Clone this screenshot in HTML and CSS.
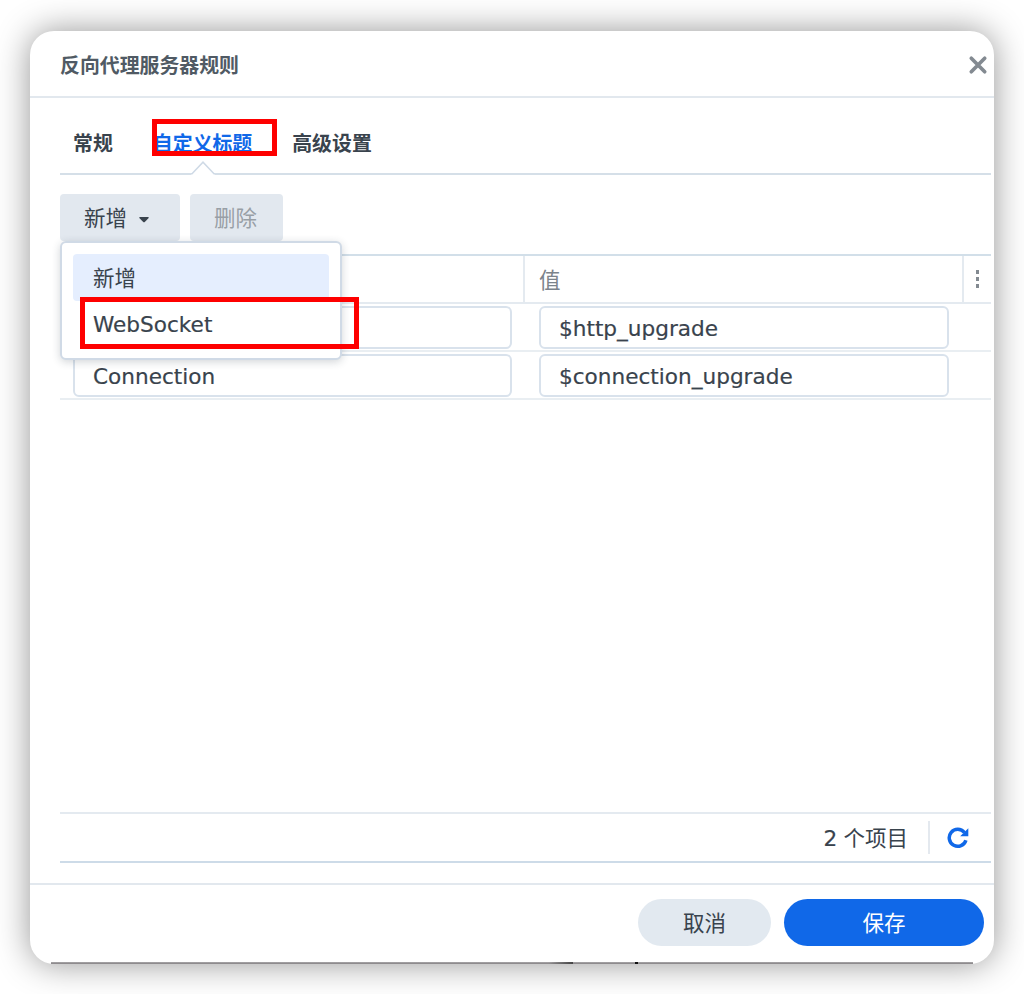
FILE: index.html
```html
<!DOCTYPE html>
<html lang="zh-CN">
<head>
<meta charset="utf-8">
<title>反向代理服务器规则</title>
<link rel="stylesheet" href="styles.css">
</head>
<body>
<div class="dialog">
  <header class="titlebar">
    <h1 class="title">反向代理服务器规则</h1>
    <svg class="close" width="20" height="20" viewBox="0 0 20 20"><path d="M3.300 3.300L16.700 16.700M16.700 3.300L3.300 16.700" stroke="#838a91" stroke-width="3.700" stroke-linecap="round"/></svg>
  </header>
  <main class="content">
    <nav class="tabs">
      <span class="tab">常规</span>
      <span class="tab tab-active">自定义标题
        <svg class="pointer" width="24" height="14" viewBox="0 0 24 14"><path d="M0 13.500L12 1.500L24 13.500V14H0Z" fill="#fff"/><path d="M0 12.700H1L12 1.200L23 12.700H24" fill="none" stroke="#cfdae6" stroke-width="1.500"/></svg>
        <i class="mark mark-tab"></i>
      </span>
      <span class="tab">高级设置</span>
    </nav>
    <div class="toolbar">
      <div class="button button-add">新增<svg width="10" height="6" viewBox="0 0 10 6"><path d="M.3 1Q0 0 1 0H9Q10 0 9.700 1L6 4.800Q5 5.800 4 4.800Z" fill="#39434d"/></svg>
        <div class="menu">
          <div class="menu-item menu-item-hover">新增</div>
          <div class="menu-item"><span class="latin">WebSocket</span></div>
          <i class="mark mark-item"></i>
        </div>
      </div>
      <div class="button button-delete">删除</div>
    </div>
    <section class="grid">
      <div class="row head"><div class="cell name"></div><div class="cell value">值</div><div class="more"><i></i><i></i><i></i></div></div>
      <div class="row"><div class="cell"><div class="field"></div></div><div class="cell"><div class="field"><span class="latin">$http_upgrade</span></div></div></div>
      <div class="row"><div class="cell"><div class="field"><span class="latin">Connection</span></div></div><div class="cell"><div class="field"><span class="latin">$connection_upgrade</span></div></div></div>
      <div class="status">
        <span class="count"><span class="latin">2</span> 个项目</span>
        <span class="divider"></span>
        <svg class="refresh" width="22" height="22" viewBox="0 0 22 22"><path d="M18.900 13.200A8.500 8.500 0 1 1 17.400 5.500" fill="none" stroke="#1068e8" stroke-width="3.500"/><path d="M21.300 1.200V9.200H13.200Z" fill="#1068e8"/></svg>
      </div>
    </section>
  </main>
  <footer class="actions">
    <div class="pill cancel">取消</div>
    <div class="pill save">保存</div>
  </footer>
</div>
</body>
</html>
```
FILE: styles.css
```css
* { box-sizing: border-box; }
body {
  margin: 0;
  padding: 31px 30px 30px;
  height: 994px;
  overflow: hidden;
  background: #fff;
  color: #39434d;
  font: 21.5px/30px "Noto Sans CJK SC", sans-serif;
}
.dialog {
  position: relative;
  display: flex;
  flex-direction: column;
  height: 933px;
  background: #fff;
  border-radius: 24px;
  box-shadow: 0 0 34px rgba(0, 0, 0, .42);
}
.dialog::after {
  content: "";
  position: absolute;
  left: 21px;
  right: 21px;
  bottom: 0;
  height: 2px;
  background:
    linear-gradient(#111, #111) 584px 0 / 3px 2px no-repeat,
    linear-gradient(90deg, transparent, #444) 498px 0 / 24px 2px no-repeat,
    linear-gradient(#aaa8aa, #858184);
}
.titlebar {
  display: flex;
  align-items: center;
  justify-content: space-between;
  height: 67px;
  padding: 0 6px 0 30px;
  border-bottom: 2px solid #e2e8ee;
}
.title { margin: 3px 0 0; font-size: 19.9px; font-weight: 600; color: #505a64; }
.close { margin-top: 3px; }
.content { display: flex; flex: 1; flex-direction: column; padding: 0 3px 20px 30px; }
.tabs {
  display: flex;
  gap: 40px;
  height: 77px;
  padding: 30px 13px 0;
  border-bottom: 2px solid #d5dfe8;
  font-size: 19.9px;
  font-weight: 700;
}
.tab { position: relative; }
.tab-active { color: #1068e8; }
.pointer { position: absolute; left: 38px; top: 33px; }
.mark { position: absolute; border: 5px solid #fe0000; }
.mark-tab { left: -1px; top: -9px; width: 125px; height: 37px; }
.toolbar { display: flex; gap: 10px; padding-top: 19px; height: 79px; }
.button {
  position: relative;
  display: flex;
  align-items: center;
  height: 47px;
  padding: 0 0 1px 24px;
  border-radius: 4px;
  background: #e2e8ef;
}
.button-add { width: 120px; gap: 12px; }
.button-add > svg { margin-top: 5px; }
.button-delete { width: 93px; color: #989fa6; }
.menu {
  position: absolute;
  z-index: 2;
  left: 0;
  top: 47px;
  width: 282px;
  height: 119px;
  padding: 11px;
  border: 2px solid #d0dae6;
  border-radius: 6px;
  background: #fff;
  box-shadow: 0 2px 8px rgba(30, 45, 60, .2);
}
.menu-item {
  display: flex;
  align-items: center;
  width: 256px;
  height: 46.500px;
  padding-left: 20px;
  border-radius: 4px;
}
.menu-item .latin { margin-top: 2px; }
.menu-item-hover { background: #e5eefe; }
.mark-item { left: 18px; top: 54px; width: 279px; height: 52px; }
.latin {
  font-family: "DejaVu Sans", "Noto Sans CJK SC", sans-serif;
  font-size: 21.6px;
  -webkit-text-stroke: .2px currentColor;
}
.grid { display: flex; flex: 1; flex-direction: column; border-top: 2px solid #d2dfe9; border-bottom: 2px solid #cddbe8; }
.row {
  display: grid;
  grid-template-columns: 465px 439px 27px;
  flex: none;
  height: 48px;
  border-bottom: 2px solid #e4eaf0;
}
.row:not(.head) { border-bottom-color: #e9eef2; }
.head { color: #7b838b; }
.cell { padding: 2px 13px; }
.row .cell:nth-child(2) { padding-right: 15px; padding-left: 14px; }
.head .value { padding-top: 8px; border-right: 2px solid #e4eaf0; }
.head .name { border-right: 2px solid #e4eaf0; }
.more { display: flex; flex-direction: column; align-items: center; justify-content: center; gap: 3.500px; }
.more i { width: 3.500px; height: 3.500px; background: #838a91; }
.field {
  display: flex;
  align-items: center;
  height: 43px;
  padding: 2px 0 0 18px;
  border: 2px solid #d9e2ec;
  border-radius: 6px;
}
.status {
  display: flex;
  align-items: center;
  justify-content: flex-end;
  height: 49px;
  margin-top: auto;
  padding-right: 22px;
  border-top: 2px solid #e4eaf0;
}
.count { word-spacing: 1.5px; }
.divider { width: 2px; height: 33px; margin: 0 17px 0 20px; background: #e4e9ef; }
.refresh { margin-top: 1px; }
.actions {
  display: flex;
  gap: 13px;
  justify-content: flex-end;
  height: 81px;
  padding: 14px 10px 0;
  border-top: 2px solid #e2e8ee;
}
.pill { display: flex; align-items: center; justify-content: center; height: 47px; padding-bottom: 1px; border-radius: 24px; }
.cancel { width: 133px; background: #e2e9f0; }
.save { width: 200px; background: #1068e8; color: #fff; }
```
